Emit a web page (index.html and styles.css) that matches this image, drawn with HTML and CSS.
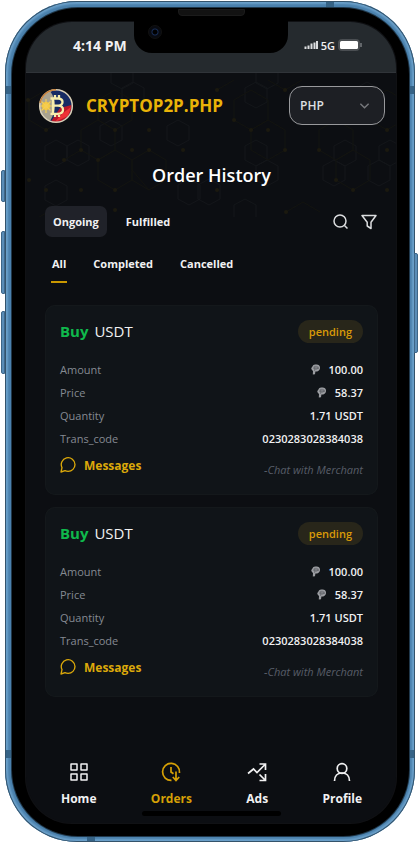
FILE: index.html
```
<!DOCTYPE html>
<html lang="en">
<head>
<meta charset="utf-8">
<meta name="viewport" content="width=device-width, initial-scale=1">
<title>Order History</title>
<link rel="stylesheet" href="styles.css">
</head>
<body>
<svg class="defs" aria-hidden="true">
  <symbol id="peso" viewBox="0 0 10 11"><path d="M2 1.400C3 .3 7 .2 8.200 1.500 9.800 3.200 9 7 6.200 7.400L4.400 7.600 4 10.300 1.800 10.600 2 7C.8 6 .2 5 .3 3.900 1 3.600 1.300 2.400 2 1.400Z" fill="#9b9da1"/><path d="M3.600 7V2.300h1.800a1.500 1.500 0 0 1 0 3H3.600M2.200 3.300h5.800M2.200 4.500h5.800" fill="none" stroke="#5d6064" stroke-width=".6"/></symbol>
  <symbol id="chat" viewBox="0 0 24 24"><path d="M22.500 11.300a10.300 10.300 0 0 1-10.300 10.300 10.300 10.300 0 0 1-4.700-1.100L1.500 22.500l1.500-6.500A10.300 10.300 0 1 1 22.500 11.300Z" fill="none" stroke="currentColor" stroke-width="2" stroke-linejoin="round"/></symbol>
</svg>
<div class="phone">
  <i class="key key-mute"></i><i class="key key-up"></i><i class="key key-down"></i><i class="key key-power"></i>
  <i class="band band-top"></i><i class="band band-upper"></i><i class="band band-lower"></i><i class="band band-bottom"></i>
  <div class="bezel">
    <i class="speaker"></i>
    <div class="notch"><i class="camera"></i></div>
    <div class="screen">
      <div class="status">
        <span class="time">4:14 PM</span>
        <span class="signals">
          <svg width="14" height="10" viewBox="0 0 14 10" aria-hidden="true"><path d="M1.500 9V6.500M4.500 9V5.500M7.500 9V3.500M10.500 9V2.500M13 9V1" stroke="#dcdddf" stroke-width="2"/></svg>
          <span>5G</span>
          <svg width="24" height="12" viewBox="0 0 24 12" aria-hidden="true"><rect x=".5" y=".5" width="21" height="11" rx="3" fill="#4a4e52" stroke="#4a4e52"/><rect x="2" y="2" width="18" height="8" rx="1.500" fill="#fff"/><path d="M23 4v4" stroke="#777b7f" stroke-width="1.500"/></svg>
        </span>
      </div>
      <div class="app">
        <svg class="mesh" viewBox="0 0 370 144" preserveAspectRatio="xMidYMin slice" aria-hidden="true">
          <defs>
            <path id="small" d="M0-13 11-7V7L0 13-11 7V-7Z"/>
            <path id="large" d="M0-20 17-10V10L0 20-17 10V-10Z"/>
          </defs>
          <g fill="none" stroke="#14161a">
            <use href="#small" x="96" y="3"/><use href="#small" x="107" y="22"/><use href="#small" x="30" y="80"/><use href="#small" x="52" y="80"/><use href="#small" x="30" y="120"/><use href="#small" x="163" y="119"/><use href="#small" x="183" y="119"/><use href="#small" x="230" y="80"/><use href="#small" x="241" y="100"/><use href="#small" x="230" y="22"/><use href="#small" x="241" y="3"/><use href="#small" x="308" y="100"/><use href="#small" x="319" y="80"/><use href="#small" x="353" y="100"/><use href="#small" x="364" y="80"/><use href="#small" x="219" y="139"/><use href="#small" x="85" y="60"/><use href="#small" x="341" y="22"/><use href="#small" x="152" y="60"/>
          </g>
          <g fill="none" stroke="#131410">
            <use href="#large" x="89" y="97"/><use href="#large" x="123" y="97"/><use href="#large" x="72" y="67"/><use href="#large" x="89" y="37"/><use href="#large" x="225" y="37"/><use href="#large" x="242" y="67"/><use href="#large" x="327" y="97"/><use href="#large" x="310" y="67"/><use href="#large" x="20" y="37"/><use href="#large" x="361" y="37"/><path d="m191 17 17-10M106 97l17 20 17-10M242 7l17 10 17-10M38 87l17-10M260 139l17-10 17 10M10 146l17-10"/>
          </g>
          <path d="M106 77h.1M72 87h.1M55 77h.1M89 117h.1M89 137h.1M123 77h.1M157 77h.1M55 117h.1M20 117h.1M3 107h.1M2 27h.1M20 57h.1M89 57h.1M123 57h.1M191 17h.1M259 17h.1M293 17h.1M208 47h.1M242 57h.1M225 57h.1M259 77h.1M293 77h.1M191 117h.1M310 107h.1M327 117h.1M361 117h.1M361 77h.1M361 57h.1M260 139h.1M38 87h.1" fill="none" stroke="#1b190f" stroke-width="4" stroke-linecap="round"/>
        </svg>
        <header class="topbar">
          <svg class="logo" viewBox="0 0 36 36" role="img" aria-label="CryptoP2P logo">
            <circle cx="18" cy="18" r="16" fill="#172b63"/>
            <path d="M22 20l11.500-3A16 16 0 0 1 13 33.500Z" fill="#b81728"/>
            <path d="M17 34Q24 25 33 19L30 28Z" fill="#ef3036"/>
            <path d="M12 3Q22 17 12 33A16 16 0 0 1 12 3Z" fill="#aaa38f"/>
            <circle cx="8" cy="18" r="4" fill="#f8c730"/><path d="M8 11v14M1.500 18H15M3.500 13.500l9 9M3.500 22.500l9-9" stroke="#f4cd55" stroke-width="1.200"/>
            <circle cx="18" cy="18" r="16.300" fill="none" stroke="#d9cfb7" stroke-width="1.500"/>
            <path d="M18 1.700A16.300 16.300 0 0 0 2 15" fill="none" stroke="#c88139" stroke-width="1.500"/>
            <path d="M15 10v16M12.500 10.500h8q4 .5 4 3.500t-4 3.700h-5M20 17.700q5 .3 5 4t-5 4.100h-7.500M17 7v4M21 7v4M17 25v4M21 25v4" fill="none" stroke="#f7edac" stroke-width="2.300"/>
          </svg>
          <span class="brand">CRYPTOP2P.PHP</span>
          <div class="currency">
            <select aria-label="Currency"><option>PHP</option></select>
            <svg viewBox="0 0 12 8" aria-hidden="true"><path d="m1.500 1.500 4.500 4.500 4.500-4.500" fill="none" stroke="#77797d" stroke-width="1.500"/></svg>
          </div>
        </header>
        <main>
          <h1>Order History</h1>
          <div class="toolbar">
            <button class="tab active" type="button">Ongoing</button>
            <button class="tab" type="button">Fulfilled</button>
            <button class="tool first" type="button" aria-label="Search"><svg viewBox="0 0 16 16"><circle cx="7" cy="7" r="6" fill="none" stroke="currentColor" stroke-width="1.500"/><path d="m11.500 11.500 3 3" stroke="currentColor" stroke-width="1.500"/></svg></button>
            <button class="tool" type="button" aria-label="Filter"><svg viewBox="0 0 16 16"><path d="M1 1.500h14L10 8.200v6.300L6.200 12V8.200Z" fill="none" stroke="currentColor" stroke-width="1.500" stroke-linejoin="round"/></svg></button>
          </div>
          <div class="filters">
            <button class="filter current" type="button">All</button>
            <button class="filter" type="button">Completed</button>
            <button class="filter" type="button">Cancelled</button>
          </div>
          <div class="orders">
            <article class="card">
              <div class="card-head"><h2><b>Buy</b> USDT</h2><span class="pill">pending</span></div>
              <dl>
                <div><dt>Amount</dt><dd><svg><use href="#peso"/></svg>100.00</dd></div>
                <div><dt>Price</dt><dd><svg><use href="#peso"/></svg>58.37</dd></div>
                <div><dt>Quantity</dt><dd>1.71 USDT</dd></div>
                <div><dt>Trans_code</dt><dd>0230283028384038</dd></div>
              </dl>
              <div class="card-foot"><a href="#messages"><svg><use href="#chat"/></svg>Messages</a><em>-Chat with Merchant</em></div>
            </article>
            <article class="card">
              <div class="card-head"><h2><b>Buy</b> USDT</h2><span class="pill">pending</span></div>
              <dl>
                <div><dt>Amount</dt><dd><svg><use href="#peso"/></svg>100.00</dd></div>
                <div><dt>Price</dt><dd><svg><use href="#peso"/></svg>58.37</dd></div>
                <div><dt>Quantity</dt><dd>1.71 USDT</dd></div>
                <div><dt>Trans_code</dt><dd>0230283028384038</dd></div>
              </dl>
              <div class="card-foot"><a href="#messages"><svg><use href="#chat"/></svg>Messages</a><em>-Chat with Merchant</em></div>
            </article>
          </div>
        </main>
        <nav>
          <a href="#home"><svg viewBox="0 0 20 20"><path d="M2 2h6v6H2ZM12 2h6v6h-6ZM2 12h6v6H2ZM12 12h6v6h-6Z" fill="none" stroke="currentColor" stroke-width="1.500" stroke-linejoin="round"/></svg>Home</a>
          <a class="here" href="#orders"><svg viewBox="0 0 20 20"><path d="M10.500 18.400A8.500 8.500 0 1 1 18.500 11M10 5v5l2.500 1.800M15 9.500v8.500M11.800 15l3.200 3.500 3.200-3.500" fill="none" stroke="currentColor" stroke-width="1.700"/></svg>Orders</a>
          <a href="#ads"><svg viewBox="0 0 20 20"><path d="M1 11.500 6.500 7l3.500 3.500L18 2.500M12.500 2H18.500V8M12.500 12.500l5.500 5.500M18.500 12v6.500H12.500" fill="none" stroke="currentColor" stroke-width="1.700"/></svg>Ads</a>
          <a href="#profile"><svg viewBox="0 0 20 20"><circle cx="10" cy="6.500" r="4.800" fill="none" stroke="currentColor" stroke-width="1.700"/><path d="M2.500 19c0-5 3-8 7.500-8s7.500 3 7.500 8" fill="none" stroke="currentColor" stroke-width="1.700"/></svg>Profile</a>
        </nav>
        <i class="home-bar"></i>
      </div>
    </div>
  </div>
</div>
</body>
</html>
```
FILE: styles.css
```
* { box-sizing: border-box; }
body { margin: 0; background: #fff; font-family: "Open Sans", "Noto Sans", sans-serif; color: #f1f1f2; }
h1, h2, dl, dd { margin: 0; }
button { border: 0; background: none; font: inherit; color: inherit; padding: 0; }
a { color: inherit; text-decoration: none; }
svg { display: block; }
.defs { position: absolute; width: 0; height: 0; }

.phone {
  position: relative;
  display: flex;
  min-height: calc(100vh - 2px);
  margin: 1px 3px 1px 5px;
  padding: 7px 6px 6px 7px;
  border-radius: 72px;
  background: #4a80ac;
  box-shadow: inset 0 0 0 1px #34536b, inset 0 0 2px 3px #6ba0ca;
}
.bezel {
  position: relative;
  display: flex;
  flex: 1;
  padding: 14px 13px 13px 14px;
  border-radius: 66px;
  background: #000;
  box-shadow: 0 0 0 1px #20384b;
}
.screen { flex: 1; display: flex; flex-direction: column; min-width: 0; border-radius: 46px; overflow: hidden; background: #0c0e12; box-shadow: 0 0 0 1px #101114; }

.key { position: absolute; left: -4px; width: 4px; border-radius: 2px 0 0 2px; background: #5a8db7; border: 1px solid #3d6688; }
.key-mute { top: 169px; height: 32px; }
.key-up { top: 230px; height: 63px; }
.key-down { top: 310px; height: 63px; }
.key-power { left: auto; right: -3px; top: 252px; height: 100px; border-radius: 0 2px 2px 0; }
.band { position: absolute; background: #366386; }
.band-top { top: 1px; left: 321px; width: 8px; height: 5px; }
.band-bottom { bottom: 1px; left: 82px; width: 8px; height: 4px; }
.band-upper, .band-lower { left: 1px; right: 1px; height: 8px; }
.band-upper { top: 85px; }
.band-lower { bottom: 84px; }
.speaker { position: absolute; top: 1px; left: calc(50% - 33px); width: 67px; height: 7px; border-radius: 0 0 4px 4px; background: #121212; border: 1px solid #1b1b1b; }
.notch { position: absolute; top: 13px; left: calc(50% - 77px); width: 154px; height: 32px; border-radius: 0 0 18px 18px; background: #000; }
.camera { position: absolute; left: 14px; top: 4px; width: 14px; height: 14px; border-radius: 50%; background: radial-gradient(circle, #000 2px, #172c55 3px, #080a10 4px); border: 1px solid #111; }

.status { display: flex; align-items: center; justify-content: space-between; height: 51px; padding: 0 34px 4px 47px; background: #252a2e; border-bottom: 1px solid #303439; }
.time { font-size: 14px; font-weight: 700; }
.signals { display: flex; align-items: center; gap: 3px; font-size: 11px; font-weight: 600; }

.app { position: relative; flex: 1; display: flex; flex-direction: column; isolation: isolate; }
.mesh { position: absolute; inset: 0 0 auto; width: 100%; height: 144px; z-index: -1; }
.topbar { display: flex; align-items: center; padding: 13px 11px 0 12px; }
.logo { width: 36px; height: 36px; }
.brand { margin-left: 12px; font-size: 17px; font-weight: 700; color: #eab308; }
.currency { position: relative; margin-left: auto; }
.currency select { appearance: none; display: block; width: 96px; height: 39px; padding: 0 10px; border: 1px solid #98999c; border-radius: 13px; background: #1d1f24; color: #dfe0e2; font: 600 12px "Open Sans", sans-serif; }
.currency svg { position: absolute; right: 15px; top: 16px; width: 11px; height: 8px; pointer-events: none; }

main { padding: 37px 18px 0 19px; }
h1 { font-size: 18px; line-height: 26px; font-weight: 600; text-align: center; color: #fff; }
.toolbar { display: flex; align-items: center; margin-top: 18px; }
.tab { height: 31px; padding: 0 8px; border-radius: 7px; font-size: 11px; font-weight: 700; }
.tab + .tab { margin-left: 11px; }
.tab.active { background: #202229; }
.tool { margin-right: 1px; color: #dcdddf; }
.tool.first { margin-left: auto; margin-right: 12px; }
.tool svg { width: 16px; height: 16px; }
.filters { display: flex; gap: 25px; margin-top: 16px; padding: 0 6px; }
.filter { height: 30px; padding: 0 1px 7px; border-bottom: 2px solid transparent; font-size: 11px; font-weight: 700; }
.filter.current { border-color: #c99700; }
.orders { display: flex; flex-direction: column; gap: 12px; margin-top: 22px; }
.card { padding: 15px; border-radius: 10px; background: #101418; box-shadow: inset 0 0 0 1px #14181b; }
.card-head { display: flex; align-items: center; justify-content: space-between; height: 23px; margin-bottom: 15px; }
h2 { font-size: 15px; line-height: 20px; font-weight: 400; padding-bottom: 2px; }
h2 b { margin-right: 2px; font-weight: 700; color: #0fb94c; }
.pill { padding: 0 11px; border-radius: 12px; background: #28261a; color: #d99a08; font-size: 11px; line-height: 23px; font-weight: 600; }
dl div { display: flex; align-items: center; justify-content: space-between; height: 23px; font-size: 11px; }
dt { color: #858a92; }
dd { display: flex; align-items: center; gap: 8px; font-weight: 600; }
dd svg { width: 10px; height: 11px; }
.card-foot { display: flex; align-items: center; justify-content: space-between; height: 30px; }
.card-foot a { display: flex; align-items: center; gap: 8px; color: #dca90a; font-size: 12px; font-weight: 700; }
.card-foot a svg { width: 16px; height: 16px; }
.card-foot em { align-self: flex-end; color: #575c67; font-size: 11px; line-height: 20px; }

nav { display: flex; justify-content: space-between; margin-top: auto; padding: 0 34px 14px 35px; }
nav a { display: flex; flex-direction: column; align-items: center; gap: 7px; font-size: 12px; line-height: 20px; font-weight: 700; }
nav svg { width: 20px; height: 20px; }
nav .here { color: #d6a006; }
.home-bar { position: absolute; bottom: 7px; left: calc(50% - 69px); width: 139px; height: 5px; border-radius: 3px; background: #000; }
```
